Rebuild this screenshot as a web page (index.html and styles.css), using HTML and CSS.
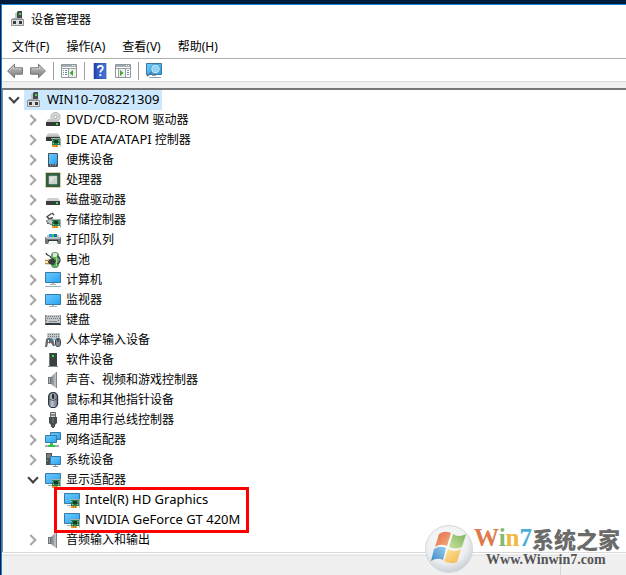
FILE: index.html
```html
<!DOCTYPE html>
<html lang="zh-CN">
<head>
  <meta charset="UTF-8">
  <title>设备管理器</title>
  <link rel="stylesheet" href="styles.css">
</head>
<body>

  <!-- icon set -->
  <svg class="defs" width="0" height="0" aria-hidden="true">
    <defs>
      <linearGradient id="blue" x1="0" y1="0" x2="1" y2="1">
        <stop offset="0" stop-color="#6cc8fb"/><stop offset=".5" stop-color="#4bb7f8"/><stop offset="1" stop-color="#22a0f2"/>
      </linearGradient>
      <linearGradient id="metal" x1="0" y1="0" x2="0" y2="1">
        <stop offset="0" stop-color="#e2e4e4"/><stop offset="1" stop-color="#a9adae"/>
      </linearGradient>
      <linearGradient id="arrow" x1="0" y1="0" x2="0" y2="1">
        <stop offset="0" stop-color="#c4c4c4"/><stop offset=".5" stop-color="#a0a0a0"/><stop offset="1" stop-color="#7c7c7c"/>
      </linearGradient>
      <linearGradient id="help" x1="0" y1="0" x2="1" y2="0">
        <stop offset="0" stop-color="#1d3c9b"/><stop offset=".25" stop-color="#3159c2"/><stop offset="1" stop-color="#4a74d8"/>
      </linearGradient>
      <linearGradient id="cone" x1="0" y1="0" x2="1" y2="0">
        <stop offset="0" stop-color="#777e84"/><stop offset="1" stop-color="#c5c9cc"/>
      </linearGradient>
      <linearGradient id="mouse" x1="0" y1="0" x2="1" y2="0">
        <stop offset="0" stop-color="#6c7782"/><stop offset=".4" stop-color="#bcc6d0"/><stop offset="1" stop-color="#5d6873"/>
      </linearGradient>
      <radialGradient id="orb" cx=".45" cy=".35" r=".65">
        <stop offset="0" stop-color="#ffffff"/><stop offset=".7" stop-color="#eceef0"/><stop offset="1" stop-color="#c9d0d6"/>
      </radialGradient>
      <linearGradient id="flagRed" x1="0" y1="0" x2="1" y2="1"><stop offset="0" stop-color="#e46a48"/><stop offset="1" stop-color="#f3b080"/></linearGradient>
      <linearGradient id="flagGreen" x1="0" y1="1" x2="1" y2="0"><stop offset="0" stop-color="#cfe2a2"/><stop offset="1" stop-color="#79b45c"/></linearGradient>
      <linearGradient id="flagBlue" x1="0" y1="1" x2="1" y2="0"><stop offset="0" stop-color="#4189c8"/><stop offset="1" stop-color="#98cdea"/></linearGradient>
      <linearGradient id="flagYellow" x1="0" y1="0" x2="1" y2="1"><stop offset="0" stop-color="#fbe79c"/><stop offset="1" stop-color="#f2b450"/></linearGradient>

      <g id="card">
        <path d="M6 7.5h9.5v8" fill="none" stroke="#a9b0ae"/>
        <rect x="7" y="8" width="8" height="6" fill="#2c8050"/>
        <rect x="9" y="9" width="4" height="3" fill="#173c2c"/>
        <path d="M7.5 9v1M14 9v1M8 12.5h1M13 12.5h1" stroke="#8ad0a0"/>
        <path d="M7 14h6v2H7z" fill="#eda12d"/>
        <path d="M9.5 14v2M11.5 14v2" stroke="#ad6415" stroke-width=".6"/>
      </g>

      <symbol id="i-device" viewBox="0 0 16 16">
        <path d="M5 2l3-1v7H5z" fill="#c3c5c6"/>
        <path d="M7 1l1-1h4v9H7z" fill="#484b4d"/>
        <rect x="9" y="2" width="2" height="2" fill="#3be04a"/>
        <path d="M3 7h9l2 2H1z" fill="#a9acae"/>
        <path d="M1.5 8.5h12v6h-12z" fill="#dcdedf" stroke="#8f9294"/>
        <path d="M3 10h3v3H3zM9 10h3v3H9z" fill="#3a3c3e"/>
      </symbol>
      <symbol id="i-dvd" viewBox="0 0 16 16">
        <circle cx="10.5" cy="5" r="4.6" fill="#d7dadb" stroke="#a0a5a6" stroke-width=".8"/>
        <circle cx="10.5" cy="5" r="1.7" fill="#f7f7f7" stroke="#9a9fa0" stroke-width=".8"/>
        <path d="M3 7h8l4 3H1z" fill="#c5c9ca"/><path d="M1 10h14v4H1z" fill="#36393a"/>
        <path d="M11 11h2v2h-2z" fill="#37dd4a"/>
      </symbol>
      <symbol id="i-ide" viewBox="0 0 16 16">
        <path d="M3 1h10l2 4H1z" fill="url(#metal)"/><path d="M1 5h14v4H1z" fill="#343839"/>
        <use href="#card" y="-1"/>
      </symbol>
      <symbol id="i-portable" viewBox="0 0 16 16">
        <rect x="3" y="1" width="10" height="14" rx="1" fill="#4a5258"/>
        <path d="M4 2h8v10H4z" fill="url(#blue)"/>
        <path d="M5 13h1M7.5 13h1M10 13h1" stroke="#c7d0d5"/>
      </symbol>
      <symbol id="i-cpu" viewBox="0 0 16 16">
        <path d="M.5.5h15v15H.5z" fill="none" stroke="#b6a252" stroke-dasharray="1 1"/>
        <path d="M1 1h14v14H1z" fill="#315e43"/><path d="M4 4h8v8H4z" fill="#dfe2df" stroke="#b2bdb5" stroke-width=".6"/>
        <path d="M4 12L12 4v8z" fill="#cbd0cc"/>
      </symbol>
      <symbol id="i-disk" viewBox="0 0 16 16">
        <path d="M3 6h10l2 3H1z" fill="#ccd0d1"/><path d="M1 9h14v4H1z" fill="#3a3e3f"/>
        <path d="M11 10h2v2h-2z" fill="#37dd4a"/>
      </symbol>
      <symbol id="i-storage" viewBox="0 0 16 16">
        <path d="M6.5 1.5L2 4.8l2 2 4-1M2 11h7M7 1l2 2" fill="none" stroke="#444849" stroke-width="1.4"/>
        <path d="M1 9l4-2 5 3-4 3z" fill="#c3c8c8" stroke="#555a5a" stroke-width=".7"/>
        <use href="#card"/>
      </symbol>
      <symbol id="i-printer" viewBox="0 0 16 16">
        <path d="M2 3h2v3H2zM12 3h2v3h-2z" fill="#c3c8ca"/>
        <path d="M4 2h8v4H4z" fill="#209bdc"/><path d="M7 2h2v3H7z" fill="#29ce5b"/><path d="M9 2h3v3H9z" fill="#186eb1"/>
        <rect y="5" width="16" height="7" rx="1" fill="#6d7579"/><path d="M1 5h14v2H1z" fill="#b9bec0"/>
        <path d="M3 8h10v2H3z" fill="#33383b"/><path d="M4 9h8l1 4H3z" fill="#f5f6f6"/>
      </symbol>
      <symbol id="i-battery" viewBox="0 0 16 16">
        <rect x="6.5" y=".5" width="7" height="15" rx="2.5" fill="#4eb94c" stroke="#666d69" stroke-width=".7"/>
        <path d="M8 1h4v4H8z" fill="#dce8dc"/><path d="M11 6h1v8h-1z" fill="#9be185"/>
        <path d="M1 1c1 4 4 1 5 5M12 4c4 1 4 7 0 8" fill="none" stroke="#3d4040" stroke-width="1.2"/>
        <path d="M3 8l5-2 3 3-2 4-6-1z" fill="#3a3d3e"/><path d="M0 8.5h4M0 11.5h4" stroke="#be8c28" stroke-width="1.5"/>
      </symbol>
      <symbol id="i-computer" viewBox="0 0 16 16">
        <path d="M.5.5h15v10H.5z" fill="url(#blue)" stroke="#3b79a3"/>
        <path d="M7 11h2v1H7zM5 12h6v1H5z" fill="#a4b3bd"/><path d="M0 14.5h16" stroke="#99aebd"/>
      </symbol>
      <symbol id="i-monitor" viewBox="0 0 16 16">
        <path d="M.5 2.5h15v10H.5z" fill="url(#blue)" stroke="#3b79a3"/>
        <path d="M7 13h2v1H7zM4 14h8v1H4z" fill="#a4b3bd"/>
      </symbol>
      <symbol id="i-keyboard" viewBox="0 0 16 16">
        <path d="M0 3h16v9H0z" fill="#c4c8ca"/><path d="M0 11h16v2H0z" fill="#303b43"/>
        <path d="M1 4.5h14M2 6.5h13M1 8.5h2M13 8.5h2" stroke="#6f777c" stroke-dasharray="1 1"/><path d="M4 9.5h8" stroke="#858d91"/>
        <path d="M.5 3v9M15.5 3v9" stroke="#858c90"/>
      </symbol>
      <symbol id="i-hid" viewBox="0 0 16 16">
        <path d="M2 1h13v7H2z" fill="#c3c8cb"/><path d="M3 2.5h11M3 4.5h11" stroke="#727a80" stroke-dasharray="1 1"/>
        <path d="M1 7q3-2 7 0l2 7H8l-2-3H3l-1 4H0z" fill="#626a70"/><path d="M3 8h1v2H3z" fill="#e6edf0"/><path d="M6 7h2v2H6z" fill="#1688dd"/>
        <path d="M4 11h1M8 10h1" stroke="#d53c31"/>
        <rect x="10.5" y="6.5" width="5" height="8" rx="2.4" fill="#858f98" stroke="#394149"/><path d="M13 7v3" stroke="#252b30"/>
      </symbol>
      <symbol id="i-software" viewBox="0 0 16 16">
        <path d="M4 1h8v13H4z" fill="#3b4043"/><path d="M4 1h1v13H4z" fill="#70777a"/><path d="M3 14h10v1H3z" fill="#878d90"/>
        <path d="M7 3h2v2H7z" fill="#34e842"/>
      </symbol>
      <symbol id="i-sound" viewBox="0 0 16 16">
        <path d="M3 5h3v7H3z" fill="#6c747b"/><path d="M6 5l5-5v16l-5-4z" fill="url(#cone)"/>
        <path d="M11 0h1v16h-1z" fill="#7d858b"/><path d="M4 6h1v5H4z" fill="#b4bac0"/>
      </symbol>
      <symbol id="i-mouse" viewBox="0 0 16 16">
        <rect x="3.6" y=".6" width="9" height="15" rx="4.2" fill="url(#mouse)" stroke="#2f373f" stroke-width="1.2"/>
        <path d="M4 7q4 3 8 0" fill="none" stroke="#525d67"/><rect x="7" y="2" width="2" height="5" rx="1" fill="#20272d"/>
      </symbol>
      <symbol id="i-usb" viewBox="0 0 16 16">
        <path d="M5.5.5h5v5h-5z" fill="#d2d4d5" stroke="#666b6e"/><path d="M7 2v2M9 2v2" stroke="#45494c"/>
        <path d="M4 5h8v6l-2 2v2H6v-2l-2-2z" fill="#484d50"/><path d="M8 6v5" stroke="#777e82"/><path d="M7 13h2v3H7z" fill="#505558"/>
      </symbol>
      <symbol id="i-network" viewBox="0 0 16 16">
        <path d="M5.5.5h10v7h-10z" fill="url(#blue)" stroke="#3b79a3"/>
        <path d="M.5 3.5h11v7H.5z" fill="url(#blue)" stroke="#3b79a3"/>
        <path d="M0 14h14" stroke="#a6b2b0" stroke-width="2"/><path d="M5 11h3v2h2v2H3v-2h2z" fill="#36bf48"/>
      </symbol>
      <symbol id="i-system" viewBox="0 0 16 16">
        <path d="M1 1h6v12H1z" fill="#4c5458"/><path d="M2 3h4M2 5h4" stroke="#a4abae"/><path d="M2 8h1v1H2z" fill="#47dd52"/>
        <path d="M5.5 4.5h10v8h-10z" fill="url(#blue)" stroke="#3b79a3"/><path d="M10 13h1v1h-1zM8 14h5v1H8z" fill="#84959f"/>
      </symbol>
      <symbol id="i-display" viewBox="0 0 16 16">
        <path d="M.5 1.5h15v10H.5z" fill="url(#blue)" stroke="#3b79a3"/><path d="M3 13.5h5" stroke="#a4b3bd"/>
        <use href="#card"/>
      </symbol>

      <symbol id="i-back" viewBox="0 0 16 16">
        <path d="M.6 8L7.5 1.2v3.6h7.9v6.4H7.5v3.6z" fill="url(#arrow)" stroke="#747474" stroke-linejoin="round"/>
        <path d="M2.2 8l4.3-4.3v2.1h7.9" fill="none" stroke="#d6d6d6" stroke-width=".8"/>
      </symbol>
      <symbol id="i-pane" viewBox="0 0 16 16">
        <path d="M.5 1.5h15v13H.5z" fill="#fff" stroke="#90979b"/><path d="M1 3h14" stroke="#a6adb1" stroke-width="2"/>
        <path d="M11 2.5h1M13 2.5h1" stroke="#fff"/><path d="M1 5.5h14M7.5 6v8" stroke="#989fa3"/>
        <path d="M2 7.5h4M2 9.5h4M2 11.5h4" stroke="#5c8fb2" stroke-dasharray="1 1 2"/>
        <path d="M8 6h7v8H8z" fill="#eee"/><path d="M12 7v6L8.5 10z" fill="#39aa2d"/>
      </symbol>
      <symbol id="i-action" viewBox="0 0 16 16">
        <path d="M.5 1.5h15v13H.5z" fill="#fff" stroke="#90979b"/><path d="M1 3h14" stroke="#a6adb1" stroke-width="2"/>
        <path d="M11 2.5h1M13 2.5h1" stroke="#fff"/><path d="M1 5.5h14M3.5 6v8M10.5 6v8" stroke="#989fa3"/>
        <path d="M4 6h6v8H4z" fill="#eee"/><path d="M5 7v6l3.5-3z" fill="#39aa2d"/>
        <path d="M12 7.5h2M12 9.5h2M12 11.5h2" stroke="#5c8fb2"/>
      </symbol>
      <symbol id="i-help" viewBox="0 0 16 16">
        <path d="M2 0h12v16H2z" fill="url(#help)" stroke="#284698" stroke-width=".6"/>
        <path d="M5.8 5.2C5.8 2 10.8 2 10.8 5c0 2.2-2.5 2.2-2.5 4.6" fill="none" stroke="#fff" stroke-width="1.8"/>
        <path d="M7.4 11.2h1.9v1.9H7.4z" fill="#fff"/>
      </symbol>
      <symbol id="i-scan" viewBox="0 0 16 16">
        <path d="M.5.5h15v11H.5z" fill="url(#blue)" stroke="#3b79a3"/>
        <path d="M6 12h4v1H6zM3 14h12v1H3z" fill="#8aa3b3"/>
        <path d="M6 9l-5 4" stroke="#59788d" stroke-width="1.8"/>
        <circle cx="9.5" cy="6" r="4" fill="#8ed2f8" stroke="#d5ecf8" stroke-width="1"/><circle cx="9.5" cy="6" r="4.7" fill="none" stroke="#4684a8" stroke-width=".6"/>
      </symbol>
    </defs>
  </svg>

  <div class="window">
    <header class="titlebar">
      <svg class="icon"><use href="#i-device"/></svg>
      <span>设备管理器</span>
    </header>

    <nav class="menubar">
      <button>文件(F)</button>
      <button>操作(A)</button>
      <button>查看(V)</button>
      <button>帮助(H)</button>
    </nav>

    <div class="toolbar">
      <button aria-label="后退"><svg class="icon"><use href="#i-back"/></svg></button>
      <button aria-label="前进"><svg class="icon flip"><use href="#i-back"/></svg></button>
      <span class="sep"></span>
      <button aria-label="显示/隐藏控制台树"><svg class="icon"><use href="#i-pane"/></svg></button>
      <span class="sep"></span>
      <button aria-label="帮助"><svg class="icon"><use href="#i-help"/></svg></button>
      <button aria-label="显示/隐藏操作窗格"><svg class="icon"><use href="#i-action"/></svg></button>
      <span class="sep"></span>
      <button aria-label="扫描检测硬件改动"><svg class="icon"><use href="#i-scan"/></svg></button>
    </div>

    <main class="tree-pane">
      <ul class="tree">
        <li>
          <div class="row">
            <button class="toggle open" aria-label="折叠"></button>
            <span class="node selected"><svg class="icon"><use href="#i-device"/></svg><span class="en">WIN10-708221309</span></span>
          </div>
          <ul class="children">
            <li class="row"><button class="toggle" aria-label="展开"></button><span class="node"><svg class="icon"><use href="#i-dvd"/></svg><span><span class="en">DVD/CD-ROM</span> 驱动器</span></span></li>
            <li class="row"><button class="toggle" aria-label="展开"></button><span class="node"><svg class="icon"><use href="#i-ide"/></svg><span><span class="en">IDE ATA/ATAPI</span> 控制器</span></span></li>
            <li class="row"><button class="toggle" aria-label="展开"></button><span class="node"><svg class="icon"><use href="#i-portable"/></svg>便携设备</span></li>
            <li class="row"><button class="toggle" aria-label="展开"></button><span class="node"><svg class="icon"><use href="#i-cpu"/></svg>处理器</span></li>
            <li class="row"><button class="toggle" aria-label="展开"></button><span class="node"><svg class="icon"><use href="#i-disk"/></svg>磁盘驱动器</span></li>
            <li class="row"><button class="toggle" aria-label="展开"></button><span class="node"><svg class="icon"><use href="#i-storage"/></svg>存储控制器</span></li>
            <li class="row"><button class="toggle" aria-label="展开"></button><span class="node"><svg class="icon"><use href="#i-printer"/></svg>打印队列</span></li>
            <li class="row"><button class="toggle" aria-label="展开"></button><span class="node"><svg class="icon"><use href="#i-battery"/></svg>电池</span></li>
            <li class="row"><button class="toggle" aria-label="展开"></button><span class="node"><svg class="icon"><use href="#i-computer"/></svg>计算机</span></li>
            <li class="row"><button class="toggle" aria-label="展开"></button><span class="node"><svg class="icon"><use href="#i-monitor"/></svg>监视器</span></li>
            <li class="row"><button class="toggle" aria-label="展开"></button><span class="node"><svg class="icon"><use href="#i-keyboard"/></svg>键盘</span></li>
            <li class="row"><button class="toggle" aria-label="展开"></button><span class="node"><svg class="icon"><use href="#i-hid"/></svg>人体学输入设备</span></li>
            <li class="row"><button class="toggle" aria-label="展开"></button><span class="node"><svg class="icon"><use href="#i-software"/></svg>软件设备</span></li>
            <li class="row"><button class="toggle" aria-label="展开"></button><span class="node"><svg class="icon"><use href="#i-sound"/></svg>声音、视频和游戏控制器</span></li>
            <li class="row"><button class="toggle" aria-label="展开"></button><span class="node"><svg class="icon"><use href="#i-mouse"/></svg>鼠标和其他指针设备</span></li>
            <li class="row"><button class="toggle" aria-label="展开"></button><span class="node"><svg class="icon"><use href="#i-usb"/></svg>通用串行总线控制器</span></li>
            <li class="row"><button class="toggle" aria-label="展开"></button><span class="node"><svg class="icon"><use href="#i-network"/></svg>网络适配器</span></li>
            <li class="row"><button class="toggle" aria-label="展开"></button><span class="node"><svg class="icon"><use href="#i-system"/></svg>系统设备</span></li>
            <li>
              <div class="row"><button class="toggle open" aria-label="折叠"></button><span class="node"><svg class="icon"><use href="#i-display"/></svg>显示适配器</span></div>
              <ul class="adapters">
                <li class="row"><span class="node"><svg class="icon"><use href="#i-display"/></svg><span class="en">Intel(R) HD Graphics</span></span></li>
                <li class="row"><span class="node"><svg class="icon"><use href="#i-display"/></svg><span class="en">NVIDIA GeForce GT 420M</span></span></li>
              </ul>
            </li>
            <li class="row"><button class="toggle" aria-label="展开"></button><span class="node"><svg class="icon"><use href="#i-sound"/></svg>音频输入和输出</span></li>
          </ul>
        </li>
      </ul>
    </main>

    <footer class="statusbar"><span class="cell"></span></footer>
  </div>

  <div class="watermark">
    <svg class="orb" viewBox="0 0 48 48" aria-hidden="true">
      <circle cx="24" cy="24" r="23.5" fill="url(#orb)" stroke="#d5d9dc"/>
      <path d="M14 9q6-4 12-1l-4 13q-6-3-12 1z" fill="url(#flagRed)"/>
      <path d="M28 9q6 4 13 0l-4 13q-7 3-13 0z" fill="url(#flagGreen)"/>
      <path d="M9 24q6-4 12-1l-3 12q-6-3-12 1z" fill="url(#flagBlue)"/>
      <path d="M23 24q6 4 13 0l-4 13q-7 3-13-1z" fill="url(#flagYellow)"/>
    </svg>
    <div class="brand">
      <div class="name"><span class="latin"><span class="w">W</span><span class="i">i</span><span class="n">n</span><span class="seven">7</span></span>系统之家</div>
      <div class="url">Www.Winwin7.com</div>
    </div>
  </div>

</body>
</html>
```

FILE: styles.css
```css
* {
  box-sizing: border-box;
}

body {
  margin: 0;
  min-height: 100vh;
  display: flex;
  position: relative;
  padding: 4px 0 0 1px;
  background: #001d3d;
  font-family: "Noto Sans", "Noto Sans CJK SC", sans-serif;
  font-size: 12px;
  color: #000;
}

button {
  padding: 0;
  border: none;
  background: none;
  font: inherit;
  color: inherit;
}

ul {
  list-style: none;
  margin: 0;
  padding: 0;
}

.defs {
  position: absolute;
}

.icon {
  display: block;
  width: 16px;
  height: 16px;
  flex: none;
}

.flip {
  transform: scaleX(-1);
}

.window {
  flex: 1;
  display: flex;
  flex-direction: column;
  border-top: 1px solid #1883d7;
  border-left: 1px solid #1883d7;
  background: #fff;
}

.titlebar {
  display: flex;
  align-items: center;
  gap: 5px;
  height: 30px;
  padding: 0 0 2px 8px;
}

.menubar {
  display: flex;
  gap: 17px;
  height: 24px;
  padding: 0 0 2px 10px;
  border-bottom: 1px solid #b0b0b0;
}

.toolbar {
  display: flex;
  align-items: center;
  gap: 7px;
  height: 23px;
  padding: 2px 0 0 5px;
  border-bottom: 1px solid #d9d9d9;
}

.sep {
  width: 1px;
  height: 18px;
  background: #a0a0a0;
}

.tree-pane {
  flex: 1;
  border-top: 6px solid #f0f0f0;
}

.tree {
  height: 100%;
  padding-left: 3px;
  border-top: 2px solid #777;
  border-left: 1px solid #828790;
}

.row {
  display: flex;
  align-items: center;
  height: 20px;
}

.children {
  padding-left: 19px;
}

.toggle {
  display: flex;
  align-items: center;
  justify-content: center;
  width: 18px;
  height: 20px;
}

.toggle::before {
  content: "";
  width: 6px;
  height: 6px;
  border: solid #a6a6a6;
  border-width: 2px 2px 0 0;
  transform: translateX(-3px) rotate(45deg);
}

.toggle.open::before {
  border-color: #404040;
  transform: translate(-1px, -2px) rotate(135deg);
}

/* labels sit a pixel above the icon's centre line */
.node {
  display: flex;
  align-items: center;
  gap: 5px;
  height: 20px;
  padding: 0 3px 2px 2px;
  white-space: nowrap;
}

.node .icon {
  margin-top: 2px;
}

.en {
  font-size: 13px;
}

.selected {
  background: #cce8ff;
}

.adapters {
  width: fit-content;
  margin-left: 32px;
  padding: 0 3px 0 5px;
  position: relative;
  outline: 3px solid #ff0000;
}

.statusbar {
  display: flex;
  height: 23px;
  border-top: 1px solid #d9d9d9;
  background: #f0f0f0;
  box-shadow: inset 0 1px #fff;
}

.cell {
  flex: 1;
  margin: 2px 65px 0 0;
  border-top: 1px solid #e3e3e3;
  border-right: 1px solid #d7d7d7;
}

/* site badge in the corner */
.watermark {
  position: absolute;
  right: 6px;
  bottom: 2px;
  display: flex;
  gap: 1px;
}

.orb {
  width: 48px;
  height: 48px;
}

.brand {
  color: #6b6b6b;
  font-weight: bold;
  white-space: nowrap;
}

.name {
  display: flex;
  align-items: center;
  height: 26px;
  font-family: "Noto Sans CJK SC", sans-serif;
  font-size: 22px;
  font-weight: 900;
}

.latin {
  font-family: "Liberation Serif", serif;
  font-size: 25px;
}

.w { color: #e07a4c; }
.i { color: #7fb972; }
.n { color: #f0b840; }
.seven { color: #4aaedb; }

.url {
  padding-left: 12px;
  font-family: "Liberation Serif", serif;
  font-size: 14px;
  line-height: 18px;
  color: #555;
}
```
